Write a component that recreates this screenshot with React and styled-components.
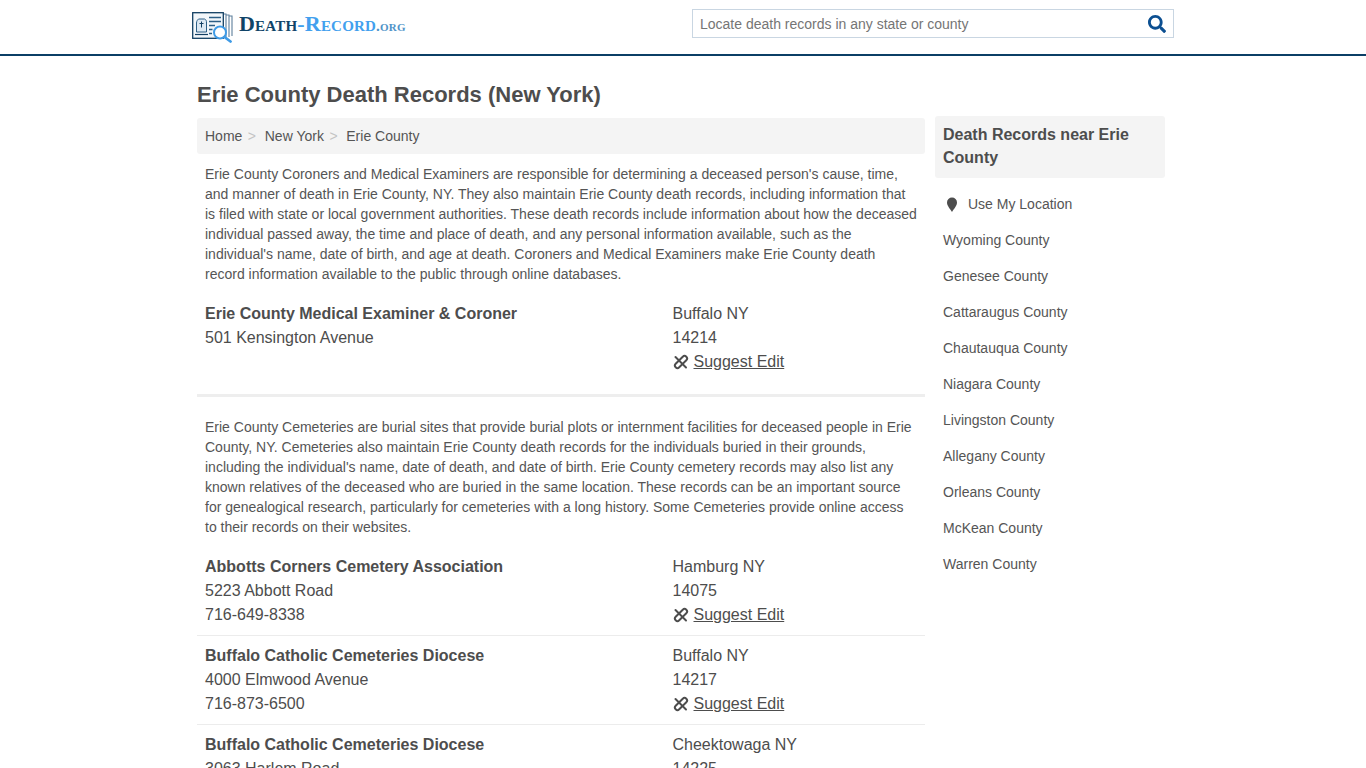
import React from 'react'
import styled, { createGlobalStyle } from 'styled-components'

const GlobalStyle = createGlobalStyle`
  html, body {
    margin: 0;
    padding: 0;
    background: #ffffff;
    color: #4d4d4d;
    font-family: "Liberation Sans", Arial, sans-serif;
    font-size: 14px;
    overflow: hidden;
    height: 768px;
  }
`

const Header = styled.header`
  height: 54px;
  border-bottom: 2px solid #0b3f66;
`

const HeaderInner = styled.div`
  width: 982px;
  height: 54px;
  margin: 0 auto;
  display: flex;
  justify-content: space-between;
  padding-top: 9px;
  box-sizing: border-box;
`

const Logo = styled.div`
  display: flex;
  align-items: flex-start;
  gap: 5px;
  margin-top: 2px;
`

const LogoText = styled.div`
  font-family: "Liberation Serif", "Times New Roman", serif;
  font-variant: small-caps;
  font-weight: bold;
  font-size: 22px;
  line-height: 30px;
  letter-spacing: 0.2px;
  color: #0f4468;
  margin-top: -2px;
`

const LogoBlue = styled.span`
  color: #42a0ee;
`

const LogoOrg = styled.span`
  color: #4f93c8;
  font-size: 15px;
`

const Search = styled.div`
  width: 482px;
  height: 29px;
  border: 1px solid #c9d6e2;
  box-sizing: border-box;
  display: flex;
  align-items: center;
  justify-content: space-between;
  padding: 0 7px;
  font-size: 14px;
  color: #757575;
`

const Page = styled.div`
  width: 972px;
  margin: 0 auto;
  padding-top: 25px;
`

const Title = styled.h1`
  margin: 0 0 11px;
  font-size: 22px;
  line-height: 27px;
  font-weight: bold;
  color: #4d4d4d;
`

const Columns = styled.div`
  display: flex;
  gap: 10px;
  align-items: flex-start;
  margin-top: -3px;
`

const Main = styled.main`
  width: 728px;
  padding-top: 2px;
`

const Crumbs = styled.nav`
  height: 36px;
  background: #f4f4f4;
  border-radius: 3px;
  padding: 0 8px;
  display: flex;
  align-items: center;
  line-height: 36px;
`

const Crumb = styled.span`
  color: #555555;
`

const CrumbSep = styled.span`
  color: #c4c4c4;
  margin: 0 8.7px 0 5.5px;
`

const Intro = styled.p`
  margin: 0;
  padding: 10px 8px 0;
  line-height: 20.1px;
  color: #555555;
`

const Listing = styled.div`
  display: grid;
  grid-template-columns: 467.5px 1fr;
  padding: ${p => p.$top || 8}px 8px 8px;
  font-size: 16px;
  line-height: 24px;
  border-top: ${p => (p.$ruled ? '1px solid #ececec' : 'none')};
`

const Name = styled.div`
  font-weight: bold;
`

const EditLine = styled.div`
  display: flex;
  align-items: center;
  gap: 5px;
`

const EditLink = styled.a`
  color: #4d4d4d;
  text-decoration: underline;
`

const Divider = styled.div`
  height: 3px;
  background: #eeeeee;
  margin: 12px 0 10px;
`

const Side = styled.aside`
  width: 230px;
`

const SideTitle = styled.h2`
  margin: 0 0 8px;
  padding: 7px 8px 9px;
  background: #f4f4f4;
  border-radius: 3px;
  font-size: 16px;
  line-height: 23px;
  font-weight: bold;
  color: #4d4d4d;
`

const SideLink = styled.div`
  height: 36px;
  line-height: 36px;
  padding: 0 8px;
  color: #555555;
  display: flex;
  align-items: center;
`

const PinWrap = styled.span`
  display: flex;
  margin: 0 10px 0 3px;
`

const LogoIcon = () => (
  <svg width="42" height="32" viewBox="0 0 42 32" fill="none">
    <path d="M31 3h3v24M34 4h3v22M37 5h3v20" stroke="#5d7f9c" strokeWidth="1.1" />
    <rect x="0.7" y="1.700" width="30.600" height="25.600" fill="#f2f7fb" stroke="#123f63" strokeWidth="1.300" />
    <path d="M4.500 21v-9c0-2 1-3 2-4h6c2 1 2 2 2 4v9z" fill="#dce9f3" stroke="#2c5f86" strokeWidth="1" />
    <path d="M9.500 10.500v6M7.500 12.500h4" stroke="#123f63" strokeWidth="1" />
    <path d="M3 23.500h13" stroke="#123f63" strokeWidth="1.200" />
    <path d="M17 6.500h12M17 10.500h12M17 14.500h6M17 18.500h3.500M17 22.500h3" stroke="#2c5f86" strokeWidth="1.300" />
    <circle cx="28" cy="21.500" r="6" fill="#ffffff" stroke="#3f9be6" strokeWidth="2" />
    <path d="M32.500 26l6 4.500" stroke="#3f9be6" strokeWidth="2.800" strokeLinecap="round" />
  </svg>
)

const SearchIcon = () => (
  <svg width="18" height="18" viewBox="0 0 512 512" fill="#0c4f91">
    <path d="M505 442.700L405.300 343c-4.500-4.500-10.600-7-17-7H372c27.600-35.300 44-79.700 44-128C416 93.100 322.900 0 208 0S0 93.100 0 208s93.100 208 208 208c48.300 0 92.700-16.400 128-44v16.300c0 6.400 2.500 12.500 7 17l99.700 99.700c9.400 9.400 24.600 9.400 33.900 0l28.300-28.300c9.400-9.400 9.400-24.600.1-34zM208 336c-70.700 0-128-57.200-128-128 0-70.700 57.200-128 128-128 70.700 0 128 57.200 128 128 0 70.700-57.200 128-128 128z" />
  </svg>
)

const UnlinkIcon = () => (
  <svg width="16" height="16" viewBox="0 0 16 16" fill="none" stroke="#4d4d4d" strokeWidth="2" strokeLinecap="round">
    <rect x="0.5" y="5.500" width="15" height="5" rx="2.500" transform="rotate(-45 8 8)" />
    <path d="M2.500 3l10.500 10.500" />
  </svg>
)

const PinIcon = () => (
  <svg width="12" height="15" viewBox="0 0 12 15" fill="#4d4d4d">
    <path d="M6 15C4 11.500 1 9 1 5.500a5 5 0 0 1 10 0C11 9 8 11.500 6 15z" />
  </svg>
)

const records = [
  ['Abbotts Corners Cemetery Association', '5223 Abbott Road', '716-649-8338', 'Hamburg NY', '14075'],
  ['Buffalo Catholic Cemeteries Diocese', '4000 Elmwood Avenue', '716-873-6500', 'Buffalo NY', '14217'],
  ['Buffalo Catholic Cemeteries Diocese', '3063 Harlem Road', '716-634-4800', 'Cheektowaga NY', '14225'],
]

const counties = [
  'Wyoming County', 'Genesee County', 'Cattaraugus County', 'Chautauqua County', 'Niagara County',
  'Livingston County', 'Allegany County', 'Orleans County', 'McKean County', 'Warren County',
]

const Edit = () => (
  <EditLine>
    <UnlinkIcon />
    <EditLink>Suggest Edit</EditLink>
  </EditLine>
)

export default function App() {
  return (
    <>
      <GlobalStyle />
      <Header>
        <HeaderInner>
          <Logo>
            <LogoIcon />
            <LogoText>
              Death<LogoBlue>-Record</LogoBlue><LogoOrg>.org</LogoOrg>
            </LogoText>
          </Logo>
          <Search>
            <span>Locate death records in any state or county</span>
            <SearchIcon />
          </Search>
        </HeaderInner>
      </Header>
      <Page>
        <Title>Erie County Death Records (New York)</Title>
        <Columns>
          <Main>
            <Crumbs>
              <Crumb>Home</Crumb><CrumbSep>&gt;</CrumbSep>
              <Crumb>New York</Crumb><CrumbSep>&gt;</CrumbSep>
              <Crumb>Erie County</Crumb>
            </Crumbs>
            <Intro>
              Erie County Coroners and Medical Examiners are responsible for determining a deceased person's cause, time, and manner of death in Erie County, NY. They also maintain Erie County death records, including information that is filed with state or local government authorities. These death records include information about how the deceased individual passed away, the time and place of death, and any personal information available, such as the individual's name, date of birth, and age at death. Coroners and Medical Examiners make Erie County death record information available to the public through online databases.
            </Intro>
            <Listing $top={17}>
              <div>
                <Name>Erie County Medical Examiner &amp; Coroner</Name>
                <div>501 Kensington Avenue</div>
              </div>
              <div>
                <div>Buffalo NY</div>
                <div>14214</div>
                <Edit />
              </div>
            </Listing>
            <Divider />
            <Intro>
              Erie County Cemeteries are burial sites that provide burial plots or internment facilities for deceased people in Erie County, NY. Cemeteries also maintain Erie County death records for the individuals buried in their grounds, including the individual's name, date of death, and date of birth. Erie County cemetery records may also list any known relatives of the deceased who are buried in the same location. These records can be an important source for genealogical research, particularly for cemeteries with a long history. Some Cemeteries provide online access to their records on their websites.
            </Intro>
            {records.map((r, i) => (
              <Listing key={i} $ruled={i > 0} $top={i === 0 ? 18 : 8}>
                <div>
                  <Name>{r[0]}</Name>
                  <div>{r[1]}</div>
                  <div>{r[2]}</div>
                </div>
                <div>
                  <div>{r[3]}</div>
                  <div>{r[4]}</div>
                  <Edit />
                </div>
              </Listing>
            ))}
          </Main>
          <Side>
            <SideTitle>Death Records near Erie County</SideTitle>
            <SideLink><PinWrap><PinIcon /></PinWrap>Use My Location</SideLink>
            {counties.map(c => <SideLink key={c}>{c}</SideLink>)}
          </Side>
        </Columns>
      </Page>
    </>
  )
}
